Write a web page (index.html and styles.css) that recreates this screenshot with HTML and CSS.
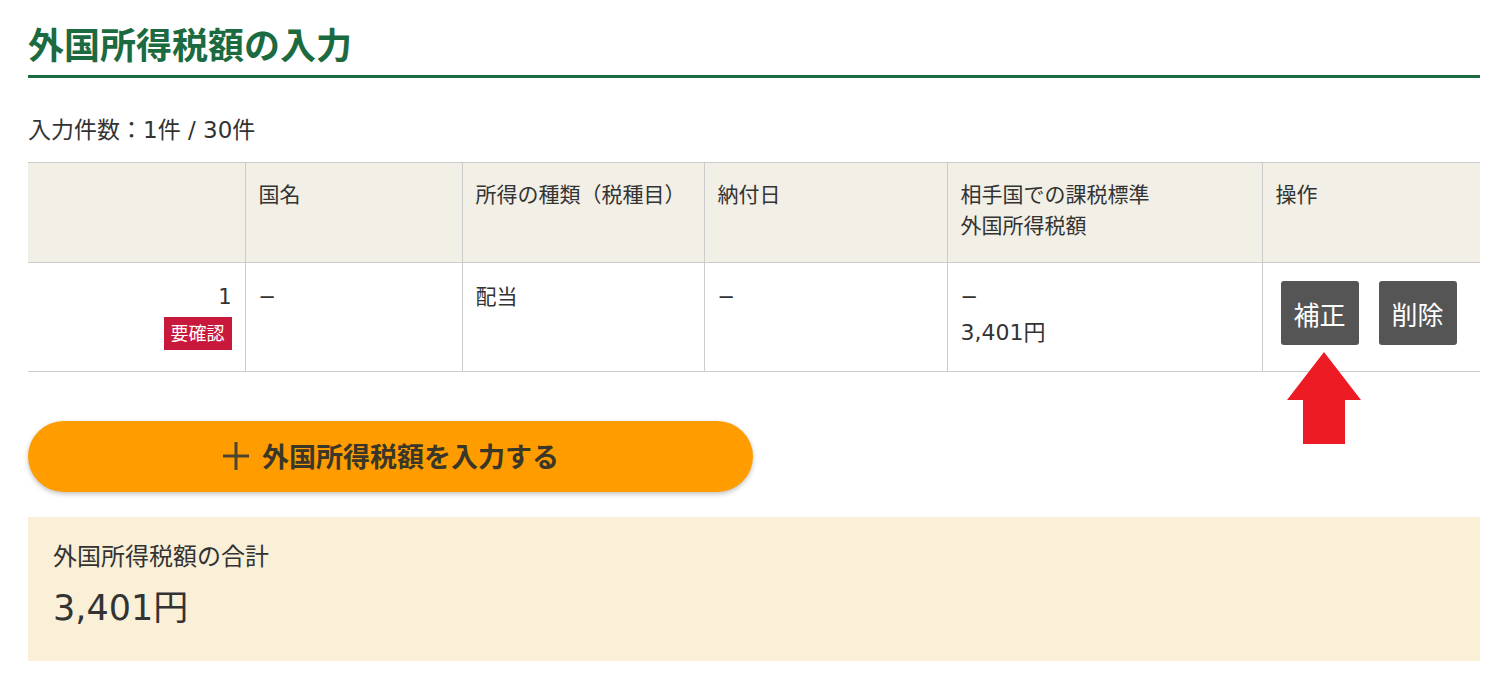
FILE: index.html
```html
<!DOCTYPE html>
<html lang="ja">

<head>
    <meta charset="UTF-8">
    <meta name="viewport" content="width=device-width, initial-scale=1.0">
    <title>外国所得税額の入力</title>
    <link rel="stylesheet" href="styles.css">
</head>

<body>
    <div class="page">
        <h1 class="page-title">外国所得税額の入力</h1>

        <p class="count">入力件数：1件 / 30件</p>

        <table class="list">
            <colgroup>
                <col class="c-no">
                <col class="c-country">
                <col class="c-kind">
                <col class="c-date">
                <col class="c-amount">
                <col class="c-ops">
            </colgroup>
            <thead>
                <tr>
                    <th></th>
                    <th>国名</th>
                    <th>所得の種類（税種目）</th>
                    <th>納付日</th>
                    <th>相手国での課税標準<br>外国所得税額</th>
                    <th>操作</th>
                </tr>
            </thead>
            <tbody>
                <tr>
                    <td class="no">
                        <div>1</div>
                        <span class="badge">要確認</span>
                    </td>
                    <td>−</td>
                    <td>配当</td>
                    <td>−</td>
                    <td>−<br><span class="num">3,401円</span></td>
                    <td>
                        <div class="ops">
                            <button class="btn-dark">補正</button>
                            <button class="btn-dark">削除</button>
                            <!-- 注目ポイントの矢印 -->
                            <svg class="arrow" width="74" height="92" viewBox="0 0 74 92">
                                <polygon points="37,0 74,48 58,48 58,92 16,92 16,48 0,48" fill="#ed1c24" />
                            </svg>
                        </div>
                    </td>
                </tr>
            </tbody>
        </table>

        <button class="btn-add">
            <svg class="plus" width="28" height="30" viewBox="0 0 28 30">
                <path d="M14 1 V29 M1 15 H27" stroke="#4a4430" stroke-width="3" fill="none" />
            </svg>
            <span>外国所得税額を入力する</span>
        </button>

        <div class="total">
            <div class="total-label">外国所得税額の合計</div>
            <div class="total-value">3,401円</div>
        </div>
    </div>
</body>

</html>
```

FILE: styles.css
```css
* {
    box-sizing: border-box;
}

body {
    margin: 0;
    color: #333;
    font-family: "DejaVu Sans", "Noto Sans CJK JP", sans-serif;
    background: #fff;
}

.page {
    width: 1452px;
    margin-left: 28px;
}

.page-title {
    margin: 22px 0 0;
    padding-bottom: 11px;
    font-size: 36px;
    line-height: 42px;
    font-weight: bold;
    color: #1c6b40;
    border-bottom: 3px solid #1c6b40;
    font-family: "Noto Sans CJK JP", sans-serif;
}

.count {
    margin: 37px 0 17px;
    font-size: 23px;
    line-height: 30px;
}

.list {
    width: 100%;
    border-collapse: collapse;
    table-layout: fixed;
    font-size: 21px;
}

.c-no { width: 217px; }
.c-country { width: 217px; }
.c-kind { width: 242px; }
.c-date { width: 243px; }
.c-amount { width: 315px; }
.c-ops { width: 218px; }

.list th,
.list td {
    border: 1px solid #ccc;
    text-align: left;
    vertical-align: top;
    font-weight: normal;
}

.list th:first-child,
.list td:first-child {
    border-left: none;
}

.list th:last-child,
.list td:last-child {
    border-right: none;
}

.list th {
    height: 100px;
    padding: 17px 13px;
    line-height: 31px;
    background: #f2efe6;
}

.list td {
    padding: 16px 13px 20px;
    line-height: 36px;
}

.list td.no {
    text-align: right;
}

.num {
    font-size: 22px;
}

.badge {
    display: inline-block;
    margin-top: 2px;
    padding: 0 7px;
    height: 33px;
    line-height: 33px;
    font-size: 18px;
    color: #fff;
    background: #c8183b;
}

.ops {
    position: relative;
    display: flex;
    gap: 20px;
    margin: 2px 0 0 5px;
}

.btn-dark {
    width: 78px;
    height: 64px;
    padding: 0;
    border: none;
    border-radius: 3px;
    color: #fff;
    background: #555;
    font-size: 26px;
    font-family: "Noto Sans CJK JP", sans-serif;
    cursor: pointer;
}

.arrow {
    position: absolute;
    left: 6px;
    top: 71px;
}

.btn-add {
    display: flex;
    align-items: center;
    justify-content: center;
    gap: 12px;
    width: 725px;
    height: 71px;
    margin-top: 49px;
    padding: 0 0 2px;
    border: none;
    border-radius: 36px;
    background: #ff9c00;
    box-shadow: 0 2px 5px rgba(0, 0, 0, 0.25);
    color: #3a3728;
    font-size: 27px;
    font-weight: bold;
    font-family: "Noto Sans CJK JP", sans-serif;
    cursor: pointer;
}

.total {
    margin-top: 25px;
    padding: 25px 25px 31px;
    background: #f9f0d7;
}

.total-label {
    font-size: 24px;
    line-height: 30px;
}

.total-value {
    margin-top: 14px;
    font-size: 35px;
    line-height: 44px;
}
```
